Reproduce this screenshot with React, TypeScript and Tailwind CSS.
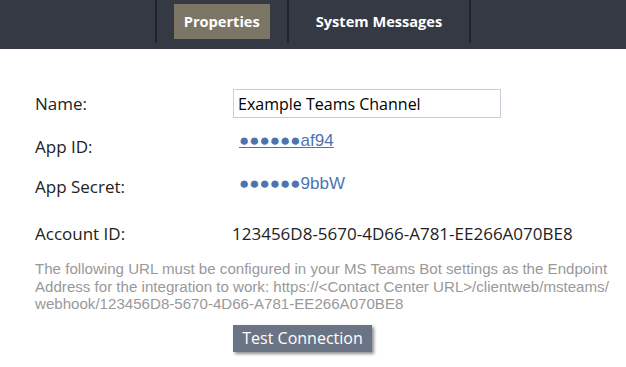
import React from 'react'

const sans = "font-['Open_Sans',sans-serif]"
const arial = "font-['Liberation_Sans',Arial,sans-serif]"

function Tab({ label, active }: { label: string; active?: boolean }) {
  return (
    <div className="flex items-center px-[17px] py-[4px]">
      <div
        className={`flex h-[35px] items-center px-[10px] text-[14.6px] font-bold text-white ${sans} ${
          active ? 'bg-[#7b7566]' : ''
        }`}
      >
        {label}
      </div>
    </div>
  )
}

const Sep = () => <div className="w-[2px] self-stretch bg-[#1f232a]" />

export default function App() {
  return (
    <div className="h-[367px] w-[626px] overflow-hidden bg-white">
      {/* top tabs */}
      <div className="flex h-[49px] justify-center bg-[#343944]">
        <div className="flex h-[43px]">
          <Sep />
          <Tab label="Properties" active />
          <Sep />
          <Tab label="System Messages" />
          <Sep />
        </div>
      </div>

      <div className={`pl-[35px] pr-[10px] pt-[40px] text-[17px] text-[#222] ${sans}`}>
        <div className="flex h-[29px] items-center">
          <div className="w-[198px]">Name:</div>
          <div className="flex h-[29px] w-[268px] items-center border border-[#c9ccd9] px-[4px] text-[16px] text-black">
            Example Teams Channel
          </div>
        </div>

        <div className="mt-[14px] flex h-[29px] items-center">
          <div className="w-[204px]">App ID:</div>
          <a className={`-mt-[12px] text-[17px] text-[#4d74b1] underline ${arial}`} href="#">
            ●●●●●●af94
          </a>
        </div>

        <div className="mt-[11px] flex h-[29px] items-center">
          <div className="w-[204px]">App Secret:</div>
          <span className={`-mt-[6px] text-[17px] text-[#4d74b1] ${arial}`}>●●●●●●9bbW</span>
        </div>

        <div className="mt-[18px] flex h-[29px] items-center">
          <div className="w-[197px]">Account ID:</div>
          <div>123456D8-5670-4D66-A781-EE266A070BE8</div>
        </div>

        <p className={`mt-[12px] text-[15.1px] leading-[17.6px] text-[#999] ${arial}`}>
          The following URL must be configured in your MS Teams Bot settings as the Endpoint Address for the
          integration to work: https://&lt;Contact Center URL&gt;/clientweb/msteams/
          webhook/123456D8-5670-4D66-A781-EE266A070BE8
        </p>

        <div className="mt-[12px] pl-[198px]">
          <button className="h-[27px] w-[139px] bg-[#6b7484] text-[16px] text-white shadow-[2px_2px_3px_rgba(0,0,0,0.45)]">
            Test Connection
          </button>
        </div>
      </div>
    </div>
  )
}
